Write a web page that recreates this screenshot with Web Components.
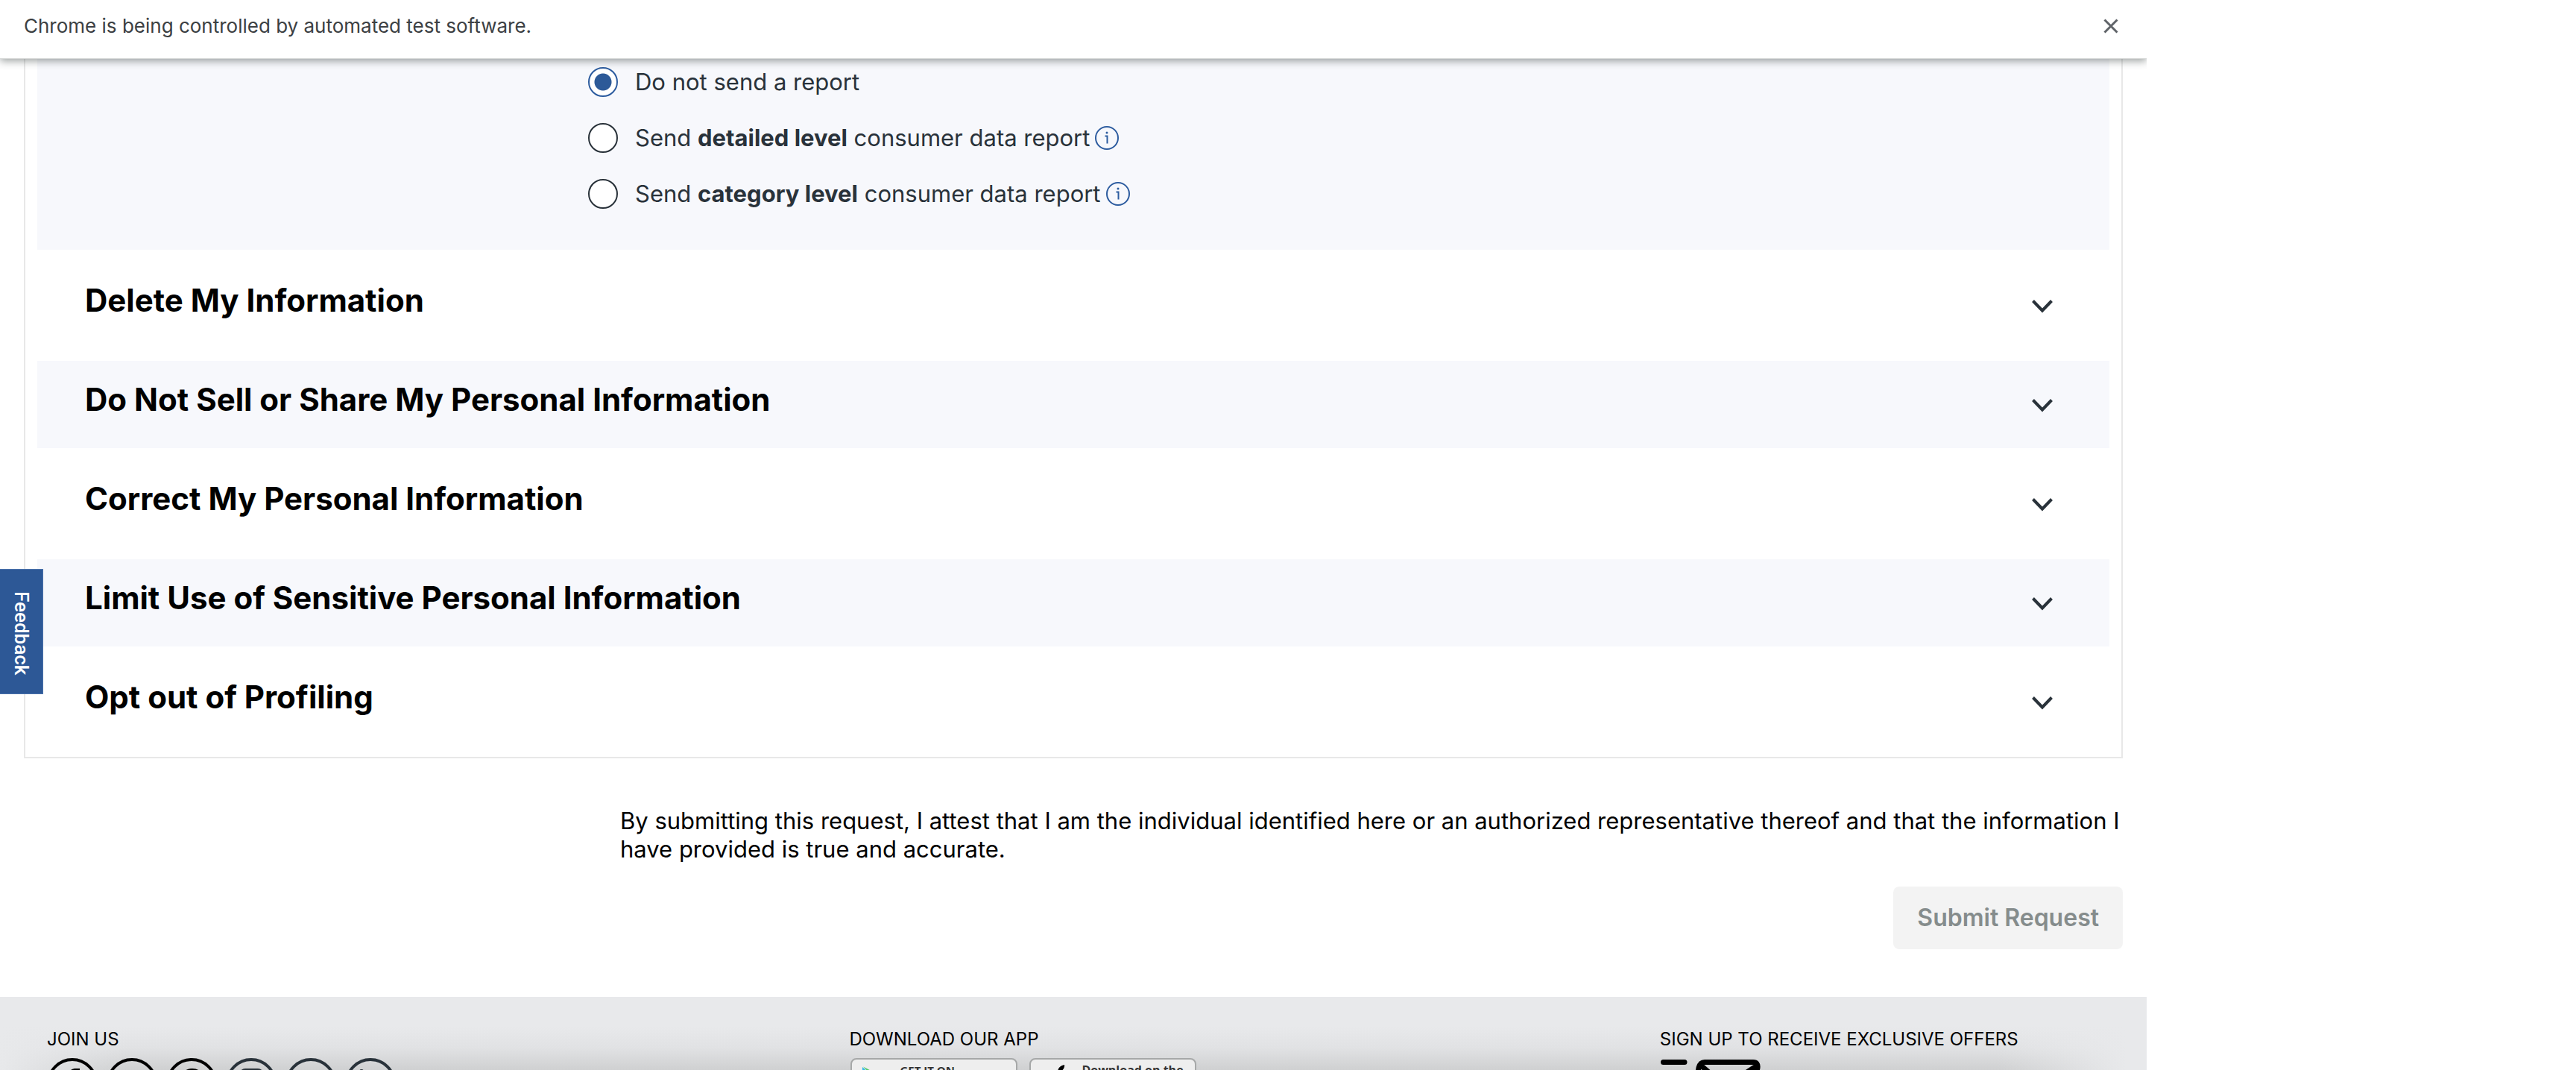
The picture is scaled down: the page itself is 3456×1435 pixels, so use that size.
<!DOCTYPE html>
<html lang="en">
<head>
<meta charset="utf-8">
<title>Privacy request</title>
<style>
  html, body { margin: 0; height: 100%; }
  body { background: #fff; color: #000; font-family: Inter, "Open Sans", "Liberation Sans", sans-serif; overflow: hidden; }
</style>
</head>
<body>
<privacy-page></privacy-page>

<script>
const define = (name, html, setup) => {
  const template = document.createElement('template');
  template.innerHTML = html;
  customElements.define(name, class extends HTMLElement {
    constructor() {
      super();
      this.attachShadow({ mode: 'open' }).append(template.content.cloneNode(true));
    }
    connectedCallback() { if (setup) setup(this, this.shadowRoot); }
  });
};

/* Browser notice along the top of the window */
define('notice-bar', `
<style>
  :host { display: flex; justify-content: space-between; align-items: flex-start; box-sizing: border-box; height: 79px;
    padding: 18px 38px 0 32px; background: #fff; border-bottom: 1px solid #d8dad9; color: #3c4043;
    font-size: 26px; line-height: 34px; position: relative; z-index: 2; box-shadow: 0 3px 10px rgba(40, 50, 48, .45); clip-path: inset(0 0 -20px 0); }
  button { border: 0; background: none; padding: 0; display: flex; height: 34px; align-items: center; color: #5f6368; }
  svg { display: block; }
</style>
<slot></slot>
<button type="button" aria-label="Close"><svg width="20" height="20" viewBox="0 0 20 20" fill="none" stroke="currentColor" stroke-width="3"><path d="M1.500 1.500l17 17M18.500 1.500l-17 17"/></svg></button>
`);

/* Information mark beside an option */
define('info-mark', `
<style>
  :host { display: block; }
  button { border: 0; background: none; padding: 0; display: block; color: #2d5c9f; }
  svg { display: block; }
</style>
<button type="button" aria-label="More information"><svg width="32" height="32" viewBox="0 0 32 32" fill="none" stroke="currentColor" stroke-width="2"><circle cx="16" cy="16" r="15"/><path d="M13.500 13.500H16.500V23.500"/><circle cx="16" cy="9" r="1.500" fill="currentColor" stroke="none"/></svg></button>
`);

/* Choice of report */
define('report-options', `
<style>
  :host { display: block; background: #f7f8fc; padding: 11px 0 55px 739px; }
  fieldset { border: 0; margin: 0; padding: 0; display: flex; flex-direction: column; gap: 35px; }
  .row { display: flex; align-items: center; gap: 7px; height: 40px; }
  label { display: flex; align-items: center; gap: 23px; font-size: 31px; line-height: 38px; color: #29323a; }
  b { font-weight: 700; }
  input { appearance: none; box-sizing: border-box; flex: none; width: 40px; height: 40px; margin: 0; border: 2px solid #29323a; border-radius: 50%; background: #fff; }
  input:checked { border-color: #2d5c9f; background: radial-gradient(circle, #2d5a98 11px, #fff 12px); }
</style>
<fieldset aria-label="Report">
  <div class="row"><label><input type="radio" name="report" checked><span>Do not send a report</span></label></div>
  <div class="row"><label><input type="radio" name="report"><span>Send <b>detailed level</b> consumer data report</span></label><info-mark></info-mark></div>
  <div class="row"><label><input type="radio" name="report"><span>Send <b>category level</b> consumer data report</span></label><info-mark></info-mark></div>
</fieldset>
`);

/* Collapsed section header */
define('request-section', `
<style>
  :host { display: block; }
  :host([shaded]) { background: #f7f8fc; }
  h2 { margin: 0; font: inherit; }
  button { display: flex; justify-content: space-between; align-items: flex-start; width: 100%; box-sizing: border-box; border: 0; background: none;
    padding: 28px 76px 26px 64px; min-height: 117px; font-family: inherit; font-size: 42px; font-weight: 700; line-height: 48px; color: #000; text-align: left; }
  svg { display: block; align-self: center; }
</style>
<h2><button type="button" aria-expanded="false"><slot></slot><svg width="28" height="18" viewBox="0 0 28 18" fill="none" stroke="#29323a" stroke-width="4"><path d="M1.500 1.500L14 14.500L26.500 1.500"/></svg></button></h2>
`);

/* Framed list of request sections */
define('request-card', `
<style>
  :host { display: flex; flex-direction: column; gap: 16px; margin: 0 32px; padding: 0 16px 15px; border: 2px solid #e8e8e8; border-top: 0; }
</style>
<slot></slot>
`);

/* Statement and submit button */
define('attest-form', `
<style>
  :host { display: block; padding: 65px 32px 64px; }
  form { display: grid; grid-template-columns: 800px 1fr; row-gap: 31px; }
  p { grid-column: 2; margin: 0; font-size: 31px; line-height: 38px; }
  button { grid-column: 2; justify-self: end; border: 0; border-radius: 8px; background: #f3f3f3; color: #858c8c;
    padding: 20px 32px; font-family: inherit; font-size: 32px; line-height: 44px; font-weight: 600; }
</style>
<form>
  <p>By submitting this request, I attest that I am the individual identified here or an authorized representative thereof and that the information I have provided is true and accurate.</p>
  <button type="submit" disabled>Submit Request</button>
</form>
`);

/* Round social link */
const glyphs = {
  Facebook: '<path d="M29 58V37h-5v-7h5v-6c0-7 4-10 10-10h5v7h-3c-3 0-4 2-4 4v5h7l-1 7h-6v21z" fill="currentColor"/>',
  Twitter: '<path d="M17 45c7 1 12-1 14-3-4 0-6-2-7-5h3c-4-1-6-4-6-7l3 1c-3-3-4-6-2-9 4 4 8 6 13 7 0-5 3-8 7-8 2 0 4 1 5 2l5-2-3 5 4-1-4 4c0 13-12 25-32 16z" fill="currentColor"/>',
  Pinterest: '<path d="M27 52l5-20M26 36c-9-9-2-20 9-20 9 0 13 6 11 13-2 10-12 12-15 6" fill="none" stroke="currentColor" stroke-width="4"/>',
  Instagram: '<rect x="20" y="16" width="29" height="34" rx="6" fill="none" stroke="currentColor" stroke-width="4"/><circle cx="34" cy="33" r="7" fill="none" stroke="currentColor" stroke-width="4"/>',
  YouTube: '<rect x="16" y="22" width="36" height="25" rx="7" fill="currentColor"/><path d="M31 28l9 6-9 6z" fill="#ddd"/>',
  LinkedIn: '<circle cx="22" cy="18" r="3" fill="currentColor"/><path d="M22 26v22M31 48V26M31 33c3-8 15-8 15 3v12" fill="none" stroke="currentColor" stroke-width="5"/>'
};
define('social-link', `
<style>
  :host { display: block; }
  a { display: block; color: inherit; }
  svg { display: block; }
</style>
<a href="#"><svg width="68" height="68" viewBox="0 0 68 68"><circle cx="34" cy="34" r="32" fill="none" stroke="currentColor" stroke-width="4"/><g></g></svg></a>
`, (host, root) => {
  const name = host.getAttribute('name');
  root.querySelector('a').setAttribute('aria-label', name);
  root.querySelector('g').innerHTML = glyphs[name];
});

/* Store badge: logo and small caption */
define('store-badge', `
<style>
  :host { display: block; }
  a { display: flex; align-items: flex-start; box-sizing: border-box; width: 224px; height: 66px; border: 2px solid #a6a8a8; border-radius: 8px; background: #eeeeee;
    padding: 6px 0 0 14px; gap: 14px; color: #333; text-decoration: none; font-family: "Open Sans", sans-serif; font-size: 15px; line-height: 16px; font-weight: 700; }
  :host([large]) a { font-size: 16px; }
  ::slotted(svg) { display: block; flex: none; }
</style>
<a href="#"><slot name="logo"></slot><span><slot></slot></span></a>
`);

define('page-footer', `
<style>
  :host { display: block; flex: 1; min-height: 0; overflow: hidden;
    background: linear-gradient(to right, #e8e9eb, rgba(232, 233, 235, 0) 6%, rgba(232, 233, 235, 0) 93%, #e8e9eb 99%), linear-gradient(#e8e9eb 40px, #e1e2e4 68px, #cfd0d1 98px); }
  .cols { display: grid; grid-template-columns: 39% 39.4% 1fr; padding: 42px 57px 0 63px; }
  h3 { margin: 0 0 10px; font-size: 24px; line-height: 30px; font-weight: 400; }
  .row { display: flex; }
  .social { gap: 12px; color: #000; }
  .slate { color: #29323a; }
  .stores { gap: 16px; padding-left: 2px; }
  svg { display: block; }
</style>
<div class="cols">
  <section><h3>JOIN US</h3>
    <div class="row social"><social-link name="Facebook"></social-link><social-link name="Twitter"></social-link><social-link name="Pinterest"></social-link><social-link class="slate" name="Instagram"></social-link><social-link class="slate" name="YouTube"></social-link><social-link class="slate" name="LinkedIn"></social-link></div>
  </section>
  <section><h3>DOWNLOAD OUR APP</h3>
    <div class="row stores">
      <store-badge><svg slot="logo" width="36" height="44" viewBox="0 0 36 44"><path d="M0 4L20 22 0 40z" fill="#35b8e8"/><path d="M1 3.500L27 17l-7 6z" fill="#4fc964"/><path d="M1 40l26-13-7-6z" fill="#e94b4b"/><path d="M27 17l9 5-9 5-7-5z" fill="#f6c443"/></svg>GET IT ON</store-badge>
      <store-badge large><svg slot="logo" width="40" height="44" viewBox="0 0 40 44"><path d="M22 11c0-5 3-9 9-10 1 5-4 10-9 10zM35 17c-4-5-9-4-13-2-5-3-14-2-15 8 0 8 5 18 10 18 3 0 4-2 7-2s4 2 7 1c3-1 6-6 7-9-7-3-7-11-3-14z" fill="#000"/></svg>Download on the</store-badge>
    </div>
  </section>
  <section><h3>SIGN UP TO RECEIVE EXCLUSIVE OFFERS</h3>
    <svg width="136" height="70" viewBox="0 0 136 70" fill="none" stroke="#000" stroke-width="7" stroke-linecap="round" stroke-linejoin="round"><path d="M4.500 5.500H33M4.500 24H26M4.500 42H20"/><path d="M60 5.500H125Q132 5.500 131 13L123 55Q121 61 115 61H51Q44 61 45 55L52 13Q54 5.500 60 5.500zM54 9L84 35Q88 38 92 35L129 11"/></svg>
  </section>
</div>
`);

/* Tab on the window edge */
define('feedback-tab', `
<style>
  :host { display: block; position: absolute; left: 0; top: 763px; z-index: 3; }
  button { display: block; box-sizing: border-box; width: 58px; height: 168px; border: 1px solid #4a72ac; border-left: 0; padding: 4px 0 0; background: #2d5896; color: #fff;
    writing-mode: vertical-rl; font-family: Roboto, sans-serif; font-weight: 500; font-size: 26px; line-height: 57px; text-align: center; }
</style>
<button type="button"><slot></slot></button>
`);

define('privacy-page', `
<style>
  :host { display: grid; grid-template-columns: 5fr 1fr; height: 100vh; }
  .view { position: relative; display: flex; flex-direction: column; min-width: 0; min-height: 0; overflow: hidden; }
</style>
<div class="view">
  <notice-bar>Chrome is being controlled by automated test software.</notice-bar>
  <request-card>
    <report-options></report-options>
    <request-section>Delete My Information</request-section>
    <request-section shaded>Do Not Sell or Share My Personal Information</request-section>
    <request-section>Correct My Personal Information</request-section>
    <request-section shaded>Limit Use of Sensitive Personal Information</request-section>
    <request-section>Opt out of Profiling</request-section>
  </request-card>
  <attest-form></attest-form>
  <page-footer></page-footer>
  <feedback-tab>Feedback</feedback-tab>
</div>
`);
</script>
</body>
</html>
